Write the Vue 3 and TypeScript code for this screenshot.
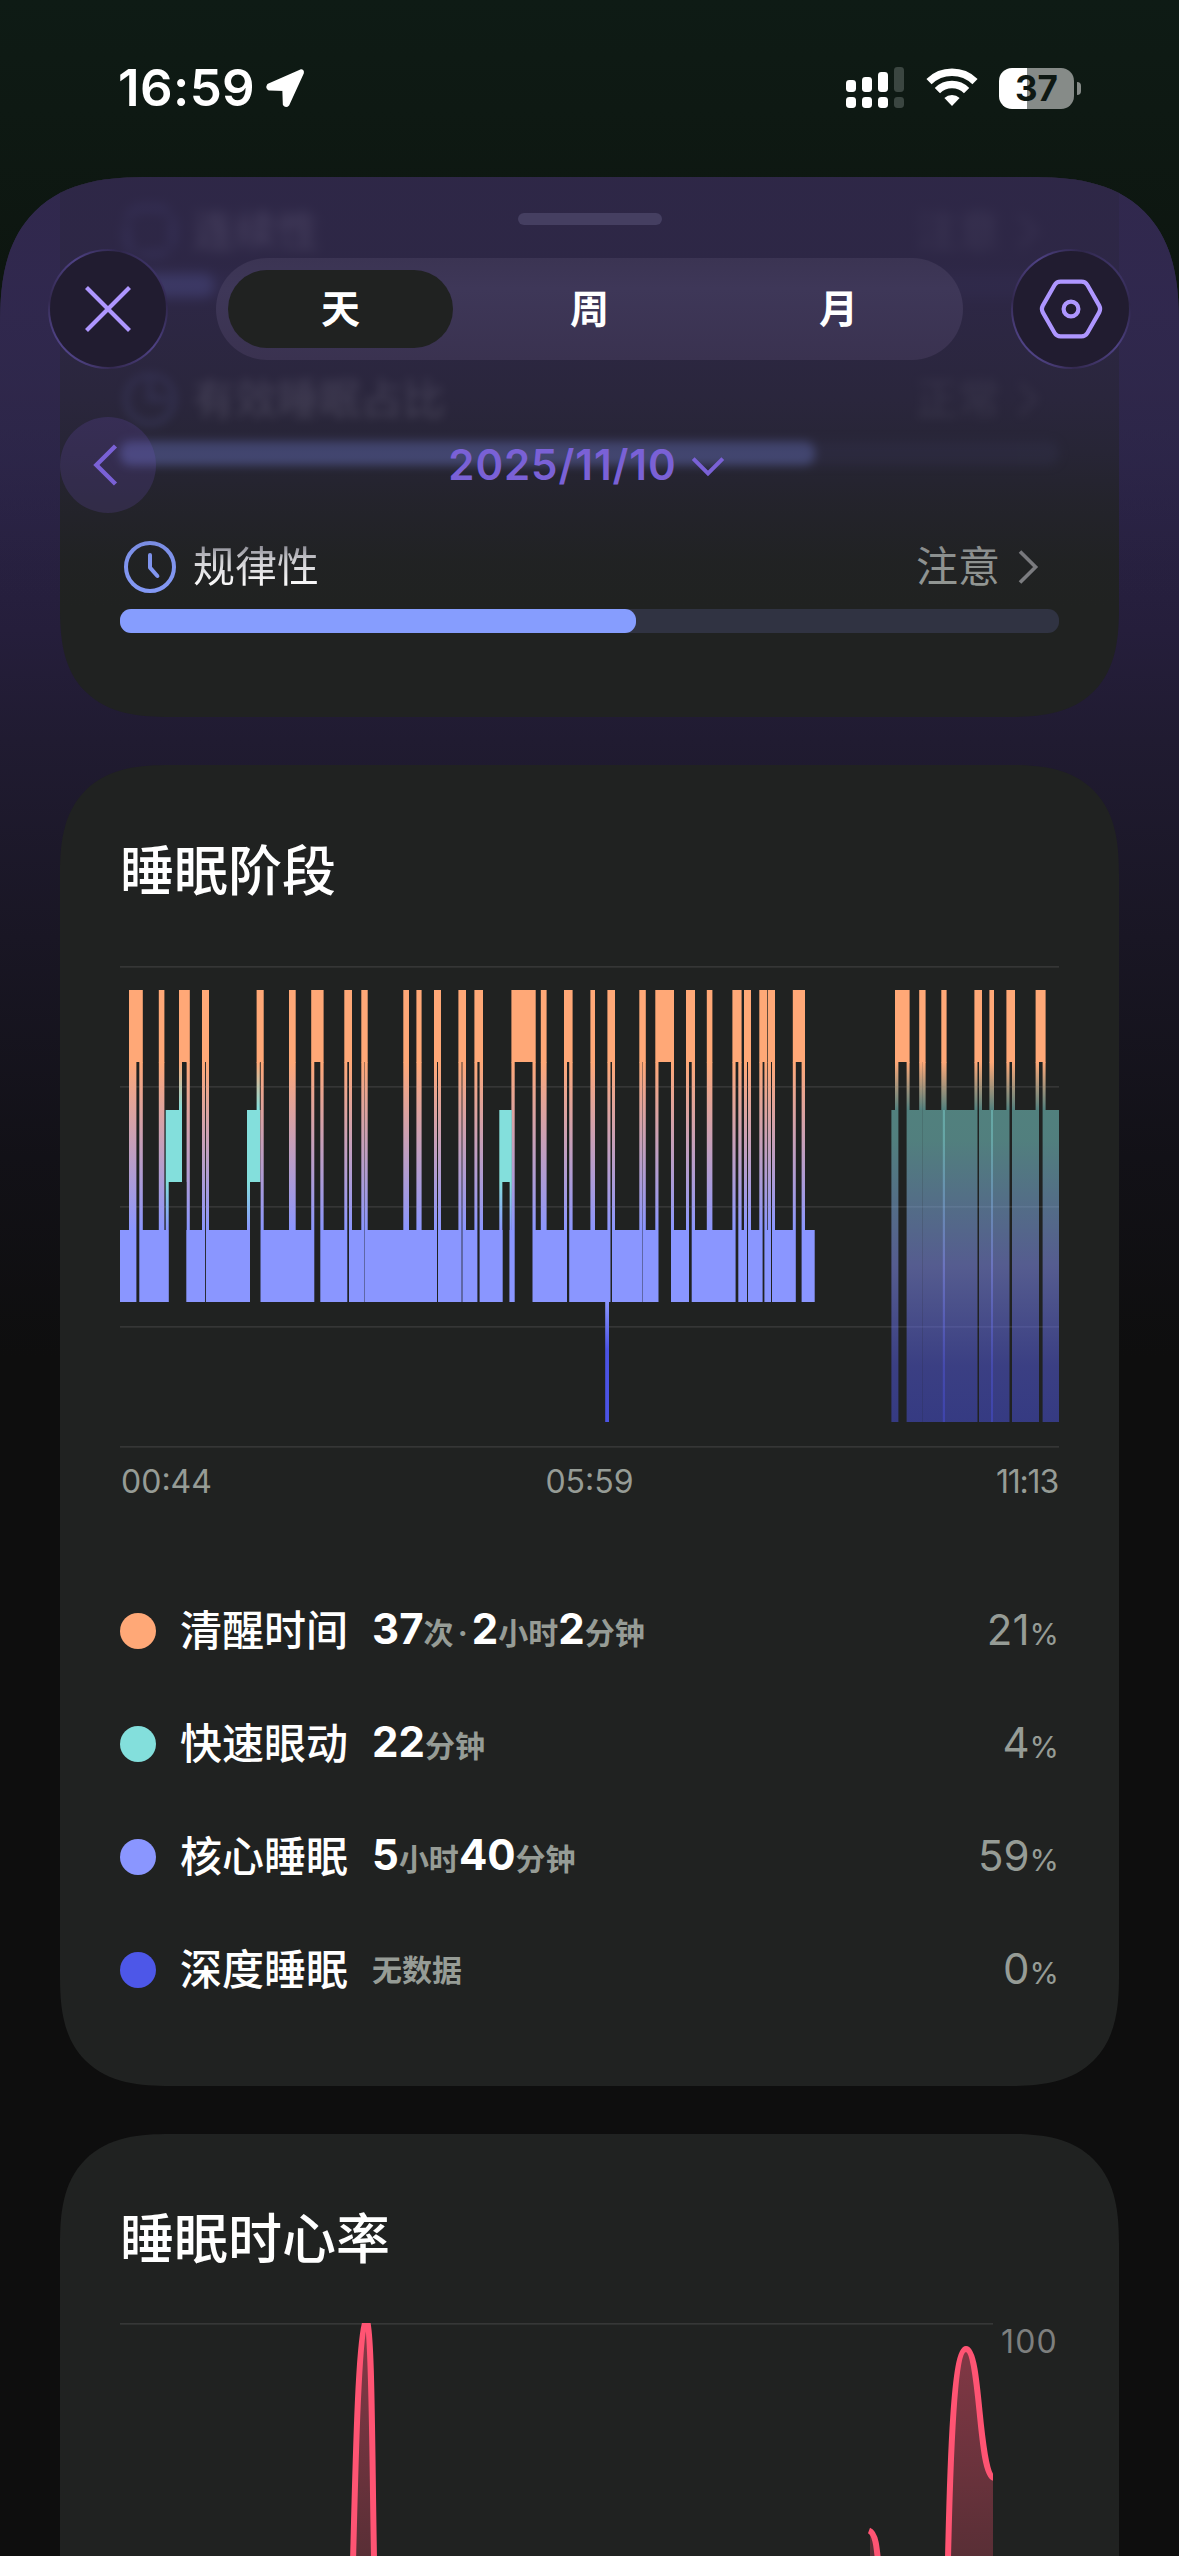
<script setup lang="ts">
interface Factor {
  name: string
  status: string
  icon: 'dashed' | 'pie' | 'clock'
  percent: number
  depth: 'far' | 'mid' | 'near'
}

interface Part {
  text: string
  unit?: boolean
}

interface Stage {
  name: string
  color: string
  parts: Part[]
  percent: number
}

// [start, end, gapStart, gapEnd, gapStrength]
type Spike = [number, number, number?, number?, number?]

const tabs = ['天', '周', '月']
const activeTab = '天'

const factors: Factor[] = [
  { name: '连续性', status: '注意', icon: 'dashed', percent: 10, depth: 'far' },
  { name: '有效睡眠占比', status: '正常', icon: 'pie', percent: 74, depth: 'mid' },
  { name: '规律性', status: '注意', icon: 'clock', percent: 55, depth: 'near' },
]

const stages: Stage[] = [
  {
    name: '清醒时间',
    color: '#ffa877',
    parts: [
      { text: '37' },
      { text: '次 · ', unit: true },
      { text: '2' },
      { text: '小时', unit: true },
      { text: '2' },
      { text: '分钟', unit: true },
    ],
    percent: 21,
  },
  { name: '快速眼动', color: '#83dfdc', parts: [{ text: '22' }, { text: '分钟', unit: true }], percent: 4 },
  {
    name: '核心睡眠',
    color: '#8a96ff',
    parts: [{ text: '5' }, { text: '小时', unit: true }, { text: '40' }, { text: '分钟', unit: true }],
    percent: 59,
  },
  { name: '深度睡眠', color: '#4d57e8', parts: [{ text: '无数据', unit: true }], percent: 0 },
]

const gridRows = [0, 120, 240, 360, 480]

// Horizontal positions are in chart units, 0 = 00:44 and 939 = 11:13.
const spikes: Spike[] = [
  [9, 22.8, 16.4, 19.3],
  [38.8, 44.4],
  [59, 69.8, 62, 66.4],
  [82, 89, 85.1, 86],
  [136.6, 143.7, 140, 140.6],
  [169, 175.7],
  [191.2, 203.6, 194.3, 200.3],
  [224.3, 232, 227.3, 229],
  [241.3, 247.7, 244, 245, 0.4],
  [283.3, 289],
  [296.4, 301.6],
  [314, 321, 317, 318],
  [338.4, 346, 341, 343, 0.4],
  [354.4, 363, 357.4, 359.6],
  [391.4, 415.7, 394.7, 412.5],
  [420.8, 426.6],
  [444, 452.6, 447, 449.2],
  [470.4, 475],
  [487.4, 495, 490.5, 492],
  [519.3, 525.8, 522, 523, 0.4],
  [535.3, 554, 538.5, 551],
  [566, 575, 569, 571.7],
  [586.8, 592.4],
  [612.4, 621.6, 615.6, 618.3],
  [624, 631, 627, 628],
  [639.3, 647.3, 642.6, 644.4],
  [648, 655, 651, 652],
  [672.8, 685, 675.8, 681.6],
]

const rems = [
  { x: 45.7, end: 62 },
  { x: 127, end: 140 },
  { x: 379.3, end: 391.8 },
]

const coreHoles = [
  [48.8, 66.3],
  [130, 140.5],
  [382.7, 389.4],
]

const napSpikes: Spike[] = [
  [775, 789.6, 778.4, 786.6],
  [799.2, 805.6, 802, 803, 0.15],
  [821.3, 826.6],
  [854.4, 862, 857.5, 859],
  [869.4, 874],
  [886.4, 895, 889.5, 892],
  [915.6, 925.6, 919, 922.6],
]

const spikeGaps = spikes.filter((s) => s[2] !== undefined)
const napGaps = napSpikes.filter((s) => s[2] !== undefined)
const risesFromRem = (s: Spike) => s[0] === 59 || s[0] === 136.6
</script>

<template>
  <div class="phone">
    <div class="status-bar">
      <div class="clock-group">
        <span class="time">16:59</span>
        <svg class="location" width="42" height="42" viewBox="0 0 42 42">
          <path d="M36.5 4.2 L4.6 18.4 Q3 20.8 5.4 21.9 L20 22.2 L20.5 37.2 Q22 39.4 23.8 37.4 L38.2 5.8 Q38.6 3.6 36.5 4.2 Z" fill="#fff" stroke="#fff" stroke-width="3.4" stroke-linejoin="round" />
        </svg>
      </div>
      <div class="indicators">
        <svg width="59" height="42" viewBox="0 0 59 42">
          <g fill="#fff">
            <rect x="0" y="13" width="10" height="12" rx="3.4" />
            <rect x="16" y="10" width="10" height="15" rx="3.4" />
            <rect x="32" y="5" width="10" height="20" rx="3.4" />
            <rect x="0" y="30" width="10" height="11" rx="3.4" />
            <rect x="16" y="30" width="10" height="11" rx="3.4" />
            <rect x="32" y="30" width="10" height="11" rx="3.4" />
          </g>
          <g fill="#3b4641">
            <rect x="48" y="0" width="10" height="25" rx="3.4" />
            <rect x="48" y="30" width="10" height="11" rx="3.4" />
          </g>
        </svg>
        <svg class="wifi" width="52" height="42" viewBox="0 0 52 42">
          <g fill="none" stroke="#fff" stroke-width="7.4">
            <path d="M3 14.6 A33 33 0 0 1 49 14.6" />
            <path d="M11.4 23.6 A20.5 20.5 0 0 1 40.6 23.6" />
          </g>
          <path d="M26 39 L18.4 31 A11 11 0 0 1 33.6 31 Z" fill="#fff" />
        </svg>
        <div class="battery">
          <div class="battery-body"><span>37</span></div>
          <div class="battery-cap"></div>
        </div>
      </div>
    </div>

    <div class="sheet">
      <div class="content">
        <section class="card factors">
          <div v-for="factor in factors" :key="factor.name" class="factor" :class="factor.depth">
            <div class="factor-head">
              <svg class="factor-icon" width="54" height="54" viewBox="0 0 54 54" fill="none" stroke="#859bf8" stroke-width="4" stroke-linecap="round">
                <template v-if="factor.icon === 'clock'">
                  <circle cx="27" cy="27" r="24" />
                  <path d="M27 15 V27.6 L34.4 36" stroke-linejoin="round" />
                </template>
                <template v-else-if="factor.icon === 'pie'">
                  <circle cx="27" cy="27" r="24" />
                  <path d="M27 8 V27 H44" />
                </template>
                <rect v-else x="4" y="4" width="46" height="46" rx="15" stroke-dasharray="26 9" />
              </svg>
              <span class="factor-name">{{ factor.name }}</span>
              <span class="factor-status">{{ factor.status }}</span>
              <svg class="factor-arrow" width="22" height="36" viewBox="0 0 22 36" fill="none" stroke="#7f8082" stroke-width="3.6">
                <path d="M3 2.4 L18.6 18 L3 33.6" />
              </svg>
            </div>
            <div class="track"><div class="fill" :style="{ width: factor.percent + '%' }"></div></div>
          </div>
        </section>

        <section class="card stages">
          <h2>睡眠阶段</h2>
          <svg class="stage-chart" width="939" height="482" viewBox="0 0 939 482">
            <defs>
              <linearGradient id="awakeCore" gradientUnits="userSpaceOnUse" x1="0" y1="96" x2="0" y2="264">
                <stop offset="0" stop-color="#ffa877" />
                <stop offset="1" stop-color="#8a96ff" />
              </linearGradient>
              <linearGradient id="awakeRem" gradientUnits="userSpaceOnUse" x1="0" y1="96" x2="0" y2="144">
                <stop offset="0" stop-color="#ffa877" />
                <stop offset="1" stop-color="#83dfdc" />
              </linearGradient>
              <linearGradient id="awakeNap" gradientUnits="userSpaceOnUse" x1="0" y1="96" x2="0" y2="144">
                <stop offset="0" stop-color="#ffa877" />
                <stop offset="1" stop-color="#51807e" />
              </linearGradient>
              <linearGradient id="remCore" gradientUnits="userSpaceOnUse" x1="0" y1="216" x2="0" y2="264">
                <stop offset="0" stop-color="#83dfdc" />
                <stop offset="1" stop-color="#8a96ff" />
              </linearGradient>
              <linearGradient id="coreDeep" gradientUnits="userSpaceOnUse" x1="0" y1="336" x2="0" y2="384">
                <stop offset="0" stop-color="#8a96ff" />
                <stop offset="1" stop-color="#4b53e5" />
              </linearGradient>
              <linearGradient id="nap" gradientUnits="userSpaceOnUse" x1="0" y1="144" x2="0" y2="456">
                <stop offset="0" stop-color="#83dfdc" />
                <stop offset="0.1" stop-color="#83dcdc" />
                <stop offset="0.5" stop-color="#8a96ff" />
                <stop offset="0.82" stop-color="#555ce6" />
                <stop offset="1" stop-color="#4b53e5" />
              </linearGradient>
              <mask id="sleepMask" maskUnits="userSpaceOnUse" x="0" y="0" width="939" height="482">
                <rect width="939" height="482" fill="#fff" />
                <rect
                  v-for="s in spikeGaps"
                  :key="s[0]"
                  :x="s[2]"
                  :y="96"
                  :width="s[3]! - s[2]!"
                  :height="risesFromRem(s) ? 48 : 246"
                  :fill-opacity="s[4] ?? 1"
                />
                <rect v-for="h in coreHoles" :key="h[0]" :x="h[0]" y="216" :width="h[1] - h[0]" height="130" />
                <rect x="62" y="144" width="4.3" height="120" />
              </mask>
              <mask id="napMask" maskUnits="userSpaceOnUse" x="0" y="0" width="939" height="482">
                <rect width="939" height="482" fill="#fff" />
                <rect
                  v-for="s in napGaps"
                  :key="s[0]"
                  :x="s[2]"
                  y="96"
                  :width="s[3]! - s[2]!"
                  height="370"
                  :fill-opacity="s[4] ?? 1"
                />
              </mask>
            </defs>

            <g fill="#353636">
              <rect v-for="y in gridRows" :key="y" x="0" :y="y" width="939" height="1.7" />
            </g>

            <g mask="url(#sleepMask)">
              <rect x="0" y="264" width="694.7" height="72" fill="#8a96ff" />
              <g v-for="s in spikes" :key="s[0]">
                <rect v-if="!risesFromRem(s)" :x="s[0]" y="96" :width="s[1] - s[0]" height="168.5" fill="url(#awakeCore)" />
                <template v-else>
                  <rect :x="s[0]" y="96" width="3.2" height="48" fill="url(#awakeRem)" />
                  <rect :x="s[1] - 3.4" y="96" width="3.4" height="168.5" fill="url(#awakeCore)" />
                </template>
                <rect :x="s[0]" y="24" :width="s[1] - s[0]" height="72.5" fill="#ffa877" />
              </g>
              <g v-for="r in rems" :key="r.x">
                <rect :x="r.x" y="216" width="3.2" height="48.5" fill="url(#remCore)" />
                <rect :x="r.x" y="144" :width="r.end - r.x" height="72" fill="#83dfdc" />
              </g>
              <rect x="389.4" y="216" width="2.4" height="48.5" fill="url(#remCore)" />
            </g>
            <rect x="485.2" y="336" width="3.8" height="120" fill="url(#coreDeep)" />

            <g mask="url(#napMask)">
              <rect x="771.4" y="144" width="167.6" height="312" fill="url(#nap)" opacity="0.5" />
              <rect x="822.8" y="144" width="2.2" height="312" fill="url(#nap)" opacity="0.42" />
              <rect x="871" y="144" width="2" height="312" fill="url(#nap)" opacity="0.42" />
              <g v-for="s in napSpikes" :key="s[0]">
                <rect :x="s[0]" y="24" :width="s[1] - s[0]" height="72.5" fill="#ffa877" />
                <rect :x="s[0]" y="96" :width="s[1] - s[0]" height="48" fill="url(#awakeNap)" />
              </g>
            </g>
          </svg>
          <div class="axis">
            <span>00:44</span>
            <span>05:59</span>
            <span>11:13</span>
          </div>
          <ul class="legend">
            <li v-for="stage in stages" :key="stage.name">
              <i class="dot" :style="{ background: stage.color }"></i>
              <span class="stage-name">{{ stage.name }}</span>
              <span class="stage-value">
                <span v-for="(part, i) in stage.parts" :key="i" :class="part.unit ? 'unit' : 'num'">{{ part.text }}</span>
              </span>
              <span class="share">{{ stage.percent }}<small>%</small></span>
            </li>
          </ul>
        </section>

        <section class="card heart">
          <h2>睡眠时心率</h2>
          <div class="heart-body">
            <svg width="873" height="260" viewBox="0 0 873 260">
              <defs>
                <linearGradient id="heartFill" gradientUnits="userSpaceOnUse" x1="0" y1="0" x2="0" y2="240">
                  <stop offset="0" stop-color="#ff5473" stop-opacity="0.46" />
                  <stop offset="1" stop-color="#ff5473" stop-opacity="0.25" />
                </linearGradient>
              </defs>
              <rect width="873" height="1.7" fill="#363737" />
              <g fill="url(#heartFill)">
                <path d="M232 260 C235 160 238 3 246.5 -4 C253 3 252 150 255 260 Z" />
                <path d="M750 260 V208 C756 211 757 224 760 260 Z" />
                <path d="M827 260 C830 130 834 26 846 26 C861 26 858 152 873 155 V260 Z" />
              </g>
              <g fill="none" stroke="#ff5473" stroke-width="6">
                <path d="M232.5 260 C235 160 238 3 246.5 -4 C252.5 3 252 150 254.5 260" />
                <path d="M749 207.5 C756 210 757 224 760 260" />
                <path d="M827.5 260 C830 130 834 26 846 26 C861 26 858 152 874 155" />
              </g>
            </svg>
            <span class="scale">100</span>
          </div>
        </section>
      </div>

      <div class="header">
        <div class="grabber"></div>
        <div class="nav">
          <div class="round">
            <svg width="48" height="48" viewBox="0 0 48 48" fill="none" stroke="#ae96ff" stroke-width="4.2">
              <path d="M2.5 2.5 L45.5 45.5 M45.5 2.5 L2.5 45.5" />
            </svg>
          </div>
          <div class="segments">
            <span v-for="tab in tabs" :key="tab" :class="{ active: tab === activeTab }">{{ tab }}</span>
          </div>
          <div class="round">
            <svg width="66" height="62" viewBox="0 0 66 62" fill="none" stroke="#ae96ff" stroke-width="4.2">
              <path d="M22.5 3.6 H43.5 Q47.4 3.6 49.4 7 L61.2 27.6 Q63 31 61.2 34.4 L49.4 55 Q47.4 58.4 43.5 58.4 H22.5 Q18.6 58.4 16.6 55 L4.8 34.4 Q3 31 4.8 27.6 L16.6 7 Q18.6 3.6 22.5 3.6 Z" />
              <circle cx="33" cy="31" r="7.4" />
            </svg>
          </div>
        </div>
        <div class="date-row">
          <div class="prev">
            <svg width="26" height="44" viewBox="0 0 26 44" fill="none" stroke="#7a61d6" stroke-width="4.4">
              <path d="M22.5 3 L3.4 22 L22.5 41" />
            </svg>
          </div>
          <div class="date">
            <span>2025/11/10</span>
            <svg width="34" height="22" viewBox="0 0 34 22" fill="none" stroke="#7a61d6" stroke-width="4">
              <path d="M2.2 2.6 L17 17.4 L31.8 2.6" />
            </svg>
          </div>
        </div>
      </div>
    </div>
  </div>
</template>

<style>
body {
  margin: 0;
  background: #0e0e0e;
}
</style>

<style scoped>
.phone {
  width: 1179px;
  height: 2556px;
  overflow: hidden;
  display: flex;
  flex-direction: column;
  background: linear-gradient(#0e1b15 0, #0e1913 110px, #0d150f 330px);
  color: #fff;
  font-family: Inter, 'Noto Sans CJK SC', sans-serif;
}

.status-bar {
  flex: none;
  height: 177px;
  box-sizing: border-box;
  padding: 67px 98px 0 118px;
  display: flex;
  justify-content: space-between;
  align-items: flex-start;
}

.clock-group,
.indicators {
  display: flex;
  align-items: center;
  height: 42px;
}

.time {
  font-size: 51px;
  font-weight: 600;
  line-height: 42px;
  letter-spacing: 0.4px;
}

.location {
  margin-left: 9px;
}

.wifi {
  margin-left: 21px;
}

.battery {
  display: flex;
  align-items: center;
  gap: 3px;
  margin-left: 21px;
}

.battery-body {
  width: 75px;
  height: 41px;
  border-radius: 13px;
  background: linear-gradient(90deg, #fff 28px, #868b88 28px);
  color: #0e1813;
  font-size: 35px;
  font-weight: 700;
  line-height: 41px;
  text-align: center;
}

.battery-cap {
  width: 4px;
  height: 13px;
  border-radius: 0 4px 4px 0;
  background: #868b88;
}

.sheet {
  position: relative;
  flex: 1;
  overflow: hidden;
  border-radius: 114px 114px 0 0;
  background: linear-gradient(
    #352b58 0,
    #30274f 140px,
    #2b2448 250px,
    #251e3b 453px,
    #201b31 563px,
    #191624 760px,
    #121117 980px,
    #0e0e0e 1180px
  );
}

.content {
  display: flex;
  flex-direction: column;
  gap: 48px;
  padding: 0 60px;
  margin-top: -120px;
}

.card {
  box-sizing: border-box;
  width: 1059px;
  border-radius: 84px;
  background: #202221;
  padding: 0 60px;
}

@supports (corner-shape: superellipse(1.4)) {
  .card {
    border-radius: 110px;
    corner-shape: superellipse(1.4);
  }

  .sheet {
    border-radius: 150px 150px 0 0;
    corner-shape: superellipse(1.4);
  }
}

.factors {
  flex: none;
  height: 660px;
  padding-top: 132px;
}

.factor {
  height: 168px;
}

.factor-head {
  display: flex;
  align-items: center;
  height: 84px;
  padding-left: 3px;
}

.factor-name {
  flex: 1;
  margin-left: 16px;
  font-size: 42px;
  line-height: 60px;
}

.factor-status {
  font-size: 42px;
  line-height: 60px;
  color: #949995;
}

.factor-arrow {
  margin: 0 20px 0 17px;
}

.track {
  height: 24px;
  border-radius: 11px;
  background: #303342;
}

.fill {
  height: 24px;
  border-radius: 11px;
  background: #869dfe;
}

.near .factor-name {
  background: linear-gradient(#a0a0a6 10px, #dcdcde 24px, #fff 46px);
  background-clip: text;
  color: transparent;
}

.far {
  filter: blur(6px);
}

.far > * {
  opacity: 0.8;
}

.mid {
  filter: blur(5px);
}

.mid .factor-head {
  opacity: 0.36;
}

.mid .track {
  opacity: 0.52;
}

h2 {
  margin: 0;
  font-size: 54px;
  font-weight: 500;
  line-height: 80px;
}

.stages {
  flex: none;
  height: 1321px;
  padding-top: 67px;
}

.stage-chart {
  display: block;
  margin-top: 54px;
}

.axis {
  display: grid;
  grid-template-columns: 1fr auto 1fr;
  margin-top: 14px;
  padding: 0 1px;
  font-size: 32px;
  line-height: 40px;
  color: #969c96;
}

.axis span:last-child {
  text-align: right;
  letter-spacing: -1.2px;
}

.legend {
  list-style: none;
  margin: 72px 0 0;
  padding: 0;
}

.legend li {
  display: flex;
  align-items: center;
  height: 113px;
}

.dot {
  width: 36px;
  height: 36px;
  border-radius: 50%;
}

.stage-name {
  margin-left: 24px;
  font-size: 42px;
  font-weight: 500;
  line-height: 60px;
}

.stage-value {
  flex: 1;
  margin: 6px 0 0 24px;
  line-height: 60px;
  font-weight: 700;
  white-space: pre;
}

.num {
  font-size: 42px;
}

.unit {
  font-size: 30px;
  font-weight: 700;
  word-spacing: -3px;
  color: #969c96;
}

.share {
  margin-top: 2px;
  font-size: 42px;
  line-height: 60px;
  color: #969c96;
}

.share small {
  font-size: 30px;
}

.heart {
  flex: none;
  height: 700px;
  padding-top: 66px;
}

.heart-body {
  display: flex;
  align-items: flex-start;
  gap: 8px;
  margin-top: 43px;
}

.scale {
  font-size: 32px;
  line-height: 38px;
  letter-spacing: 1.2px;
  color: #7d7f7e;
}

.header {
  position: absolute;
  inset: 0 0 auto 0;
  height: 430px;
  background: linear-gradient(
    rgba(48, 40, 76, 0.88) 0,
    rgba(48, 40, 77, 0.82) 120px,
    rgba(47, 40, 74, 0.66) 225px,
    rgba(46, 40, 74, 0.5) 275px,
    rgba(46, 39, 74, 0.26) 325px,
    rgba(44, 38, 70, 0.06) 385px,
    rgba(44, 38, 70, 0) 430px
  );
}

.grabber {
  width: 144px;
  height: 12px;
  margin: 36px auto 0;
  border-radius: 6px;
  background: #453f61;
}

.nav {
  display: flex;
  align-items: center;
  justify-content: space-between;
  margin-top: 24px;
  padding: 0 48px;
}

.round {
  box-sizing: border-box;
  width: 120px;
  height: 120px;
  border: 2px solid transparent;
  border-radius: 50%;
  background:
    linear-gradient(#211c30, #211c30) padding-box,
    linear-gradient(48deg, #504386 15%, #33294f 28%, #4f4285 55%, #2f274b 78%, #4a3e7c 92%) border-box;
  display: flex;
  align-items: center;
  justify-content: center;
}

.segments {
  display: flex;
  gap: 24px;
  padding: 12px;
  border-radius: 51px;
  background: linear-gradient(#3b3453, #3e3758 30%, #3a3250);
}

.segments span {
  width: 225px;
  height: 78px;
  border-radius: 39px;
  font-size: 39px;
  font-weight: 700;
  line-height: 78px;
  text-align: center;
}

.segments .active {
  background: #202221;
}

.date-row {
  display: flex;
  align-items: center;
  margin-top: 48px;
  padding: 0 60px;
}

.prev {
  width: 96px;
  height: 96px;
  border-radius: 50%;
  background: rgba(122, 90, 220, 0.17);
  display: flex;
  align-items: center;
  justify-content: center;
}

.prev svg {
  margin-right: 4px;
}

.date {
  flex: 1;
  display: flex;
  align-items: center;
  justify-content: center;
  gap: 14px;
  margin-right: 102px;
  color: #7a61d6;
  font-size: 42px;
  font-weight: 600;
  line-height: 60px;
  letter-spacing: 0.9px;
}

.date svg {
  margin-top: 4px;
}
</style>
